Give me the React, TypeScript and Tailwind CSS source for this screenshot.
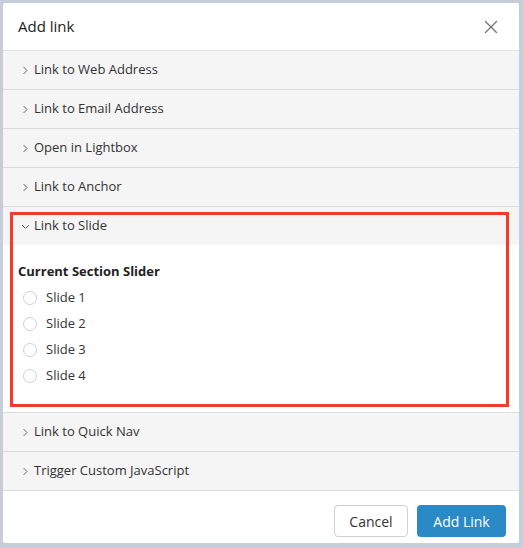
import { X } from "lucide-react";

const Chevron = ({ open = false }: { open?: boolean }) => (
  <svg width="9" height="9" viewBox="0 0 9 9" className="shrink-0">
    {open ? (
      <path d="M1 3 L4.5 6.5 L8 3" fill="none" stroke="#666" strokeWidth="1" />
    ) : (
      <path d="M2.5 1 L6 4.5 L2.5 8" fill="none" stroke="#666" strokeWidth="1" />
    )}
  </svg>
);

const Row = ({ label, open = false }: { label: string; open?: boolean }) => (
  <div className="h-[38px] flex items-center gap-[4px] pl-[18px] bg-[#f5f5f5] text-[13px] text-[#333]">
    <Chevron open={open} />
    <span>{label}</span>
  </div>
);

const slides = ["Slide 1", "Slide 2", "Slide 3", "Slide 4"];

const App = () => {
  return (
    <div
      className="w-[523px] h-[548px] bg-[#c6cfd9] pt-[3px] pl-[3px] pr-[4px] pb-[5px]"
      style={{ fontFamily: '"Open Sans", "Noto Sans", sans-serif' }}
    >
      <div className="relative h-full bg-white rounded-[2px] flex flex-col">
        <div className="h-[48px] flex items-center justify-between pl-[15px] pr-[17px] border-b border-[#e2e2e2]">
          <h1 className="text-[15px] text-[#222]">Add link</h1>
          <X size={22} strokeWidth={1.5} className="text-[#777]" />
        </div>

        <div className="border-b border-[#dcdcdc]">
          <Row label="Link to Web Address" />
        </div>
        <div className="border-b border-[#dcdcdc]">
          <Row label="Link to Email Address" />
        </div>
        <div className="border-b border-[#dcdcdc]">
          <Row label="Open in Lightbox" />
        </div>
        <div className="border-b border-[#dcdcdc]">
          <Row label="Link to Anchor" />
        </div>
        <div className="border-b border-[#dcdcdc]">
          <Row label="Link to Slide" open />
          <div className="pl-[15px] pt-[17px] pb-[23px]">
            <div className="text-[13px] font-bold text-[#222] leading-[18px] mb-[5px]">
              Current Section Slider
            </div>
            {slides.map((s) => (
              <label key={s} className="h-[26px] flex items-center gap-[9px] pl-[5px] text-[13px] text-[#333]">
                <span className="w-[14px] h-[14px] rounded-full border border-[#cfcfcf] bg-white" />
                <span>{s}</span>
              </label>
            ))}
          </div>
        </div>
        <div className="border-b border-[#dcdcdc]">
          <Row label="Link to Quick Nav" />
        </div>
        <div className="border-b border-[#dcdcdc]">
          <Row label="Trigger Custom JavaScript" />
        </div>

        <div className="flex-1 flex justify-end items-start gap-[9px] pt-[14px] pr-[13px]">
          <button className="w-[74px] h-[32px] rounded-[4px] border border-[#d0d0d0] bg-white text-[14px] text-[#333]">
            Cancel
          </button>
          <button className="w-[89px] h-[32px] rounded-[4px] bg-[#2a8ac5] text-[14px] text-white">
            Add Link
          </button>
        </div>

        <div className="absolute left-[7px] top-[209px] w-[499px] h-[195px] border-[3px] border-[#f4392d] pointer-events-none" />
      </div>
    </div>
  );
};

export default App;
